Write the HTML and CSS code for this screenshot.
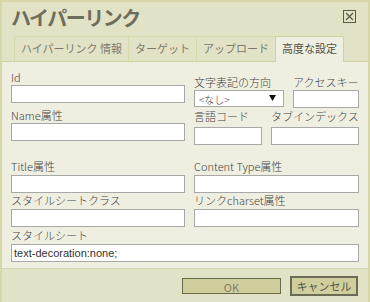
FILE: index.html
```html
<!DOCTYPE html>
<html lang="ja">

<head>
    <meta charset="UTF-8" />
    <title>ハイパーリンク</title>
    <link rel="stylesheet" href="styles.css">
</head>

<body>
    <div class="dialog">
        <div class="titlebar">
            <h1>ハイパーリンク</h1>
            <span class="close">
                <svg width="13" height="13" viewBox="0 0 13 13">
                    <rect x="0.5" y="0.5" width="12" height="12" fill="none" stroke="#5a5a4a" />
                    <path d="M3 3 L10 10 M10 3 L3 10" stroke="#5a5a4a" stroke-width="1.2" />
                </svg>
            </span>
        </div>
        <div class="tabs">
            <span class="tab">ハイパーリンク 情報</span>
            <span class="tab">ターゲット</span>
            <span class="tab">アップロード</span>
            <span class="tab active">高度な設定</span>
        </div>
        <div class="panel">
            <div class="top">
                <div class="col-left">
                    <div class="field">
                        <label>Id</label>
                        <input type="text">
                    </div>
                    <div class="field field-next">
                        <label>Name属性</label>
                        <input type="text">
                    </div>
                </div>
                <div class="col-right">
                    <div class="pair">
                        <div class="field w-dir">
                            <label>文字表記の方向</label>
                            <div class="select">
                                <span>&lt;なし&gt;</span>
                                <svg class="arrow" width="7" height="6" viewBox="0 0 7 6">
                                    <path d="M0 0 H7 L3.5 6 Z" fill="#111" />
                                </svg>
                            </div>
                        </div>
                        <div class="field w-key">
                            <label>アクセスキー</label>
                            <input type="text">
                        </div>
                    </div>
                    <div class="pair pair-2">
                        <div class="field w-lang">
                            <label>言語コード</label>
                            <input type="text">
                        </div>
                        <div class="field w-tab">
                            <label>タブインデックス</label>
                            <input type="text">
                        </div>
                    </div>
                </div>
            </div>
            <div class="row">
                <div class="field">
                    <label>Title属性</label>
                    <input type="text">
                </div>
                <div class="field">
                    <label>Content Type属性</label>
                    <input type="text">
                </div>
            </div>
            <div class="row">
                <div class="field">
                    <label>スタイルシートクラス</label>
                    <input type="text">
                </div>
                <div class="field">
                    <label>リンクcharset属性</label>
                    <input type="text">
                </div>
            </div>
            <div class="field full">
                <label>スタイルシート</label>
                <input type="text" value="text-decoration:none;">
            </div>
        </div>
        <div class="footer">
            <button class="btn btn-ok">OK</button>
            <button class="btn btn-cancel">キャンセル</button>
        </div>
    </div>
</body>

</html>
```

FILE: styles.css
```css
body {
    margin: 0;
    padding: 0;
    font-family: "Liberation Sans", "Noto Sans CJK JP", sans-serif;
    font-size: 11px;
    color: #4a4a4a;
    background-color: #e2e2c6;
}

.dialog {
    width: 370px;
    height: 302px;
    box-sizing: border-box;
    border: 2px solid #d6d6a6;
    border-bottom: none;
    background-color: #e2e2c6;
    display: flex;
    flex-direction: column;
}

.titlebar {
    height: 34px;
    display: flex;
    justify-content: space-between;
    align-items: flex-start;
    padding: 0 12px 0 9px;
}

.titlebar h1 {
    margin: 0;
    font-family: "Noto Sans CJK JP", sans-serif;
    font-size: 20px;
    letter-spacing: -1.5px;
    line-height: 32px;
    font-weight: bold;
    color: #6d6d5b;
}

.close {
    margin-top: 8px;
    display: flex;
}

.tabs {
    display: flex;
    padding-left: 12px;
    height: 25px;
}

.tab {
    box-sizing: border-box;
    height: 25px;
    line-height: 23px;
    padding: 0 6px;
    border: 1px solid #d8d8ab;
    border-bottom: none;
    border-right: none;
    font-family: "Noto Sans CJK JP", sans-serif;
    font-size: 11px;
    color: #7a7a6e;
}

.tab.active {
    height: 26px;
    background-color: #efefe1;
    border-right: 1px solid #d2d29e;
    border-left: 1px solid #d2d29e;
    border-top: 1px solid #d2d29e;
    color: #505048;
    position: relative;
    z-index: 1;
}

.panel {
    flex: 1;
    background-color: #efefe1;
    border-top: 1px solid #d2d29e;
    padding: 8px 9px 0 9px;
}

.field {
    display: flex;
    flex-direction: column;
}

.field label {
    line-height: 14px;
    margin-bottom: 1px;
    white-space: nowrap;
    font-family: "Noto Sans CJK JP", sans-serif;
    font-weight: 300;
    color: #444;
}

.field input {
    box-sizing: border-box;
    height: 18px;
    margin: 0;
    padding: 0 2px;
    border: 1px solid #a8a8a8;
    background-color: #fff;
    font-family: "Liberation Sans", sans-serif;
    font-size: 11px;
    color: #333;
    outline: none;
}

.top {
    display: flex;
    gap: 9px;
}

.col-left {
    width: 174px;
}

.field-next {
    margin-top: 5px;
}

.col-right {
    flex: 1;
    padding-top: 5px;
}

.pair {
    display: flex;
    justify-content: space-between;
}

.pair-2 {
    margin-top: 1px;
}

.pair-2 input {
    margin-top: 3px;
}

.w-dir {
    width: 90px;
}

.w-key {
    width: 66px;
}

.w-lang {
    width: 68px;
}

.w-tab {
    width: 88px;
}

.select {
    box-sizing: border-box;
    height: 17px;
    border: 1px solid #a8a8a8;
    background-color: #fff;
    display: flex;
    justify-content: space-between;
    align-items: center;
    padding: 1px 7px 0 4px;
    font-family: "Noto Sans CJK JP", sans-serif;
    font-weight: 300;
    font-size: 10px;
    color: #333;
}

.select .arrow {
    margin-bottom: 3px;
}

.row {
    display: grid;
    grid-template-columns: 174px 1fr;
    gap: 9px;
}

.row .field label,
.full label {
    margin-bottom: 2px;
}

.row:nth-child(2) {
    margin-top: 14px;
}

.full {
    margin-top: 1px;
}

.footer {
    height: 34px;
    border-top: 1px solid #d8d8b4;
    display: flex;
    justify-content: flex-end;
    align-items: center;
    gap: 9px;
    padding-right: 10px;
    box-sizing: border-box;
}

.btn {
    box-sizing: border-box;
    margin: 0;
    padding: 0;
    font-family: "Noto Sans CJK JP", sans-serif;
    font-size: 11px;
    background-color: #cfcf9d;
}

.btn-ok {
    width: 99px;
    height: 16px;
    border: 1px solid #6a6a4e;
    color: #7e7e6c;
}

.btn-cancel {
    width: 68px;
    height: 20px;
    border: 2px solid #6a6a55;
    color: #55554a;
}
```
